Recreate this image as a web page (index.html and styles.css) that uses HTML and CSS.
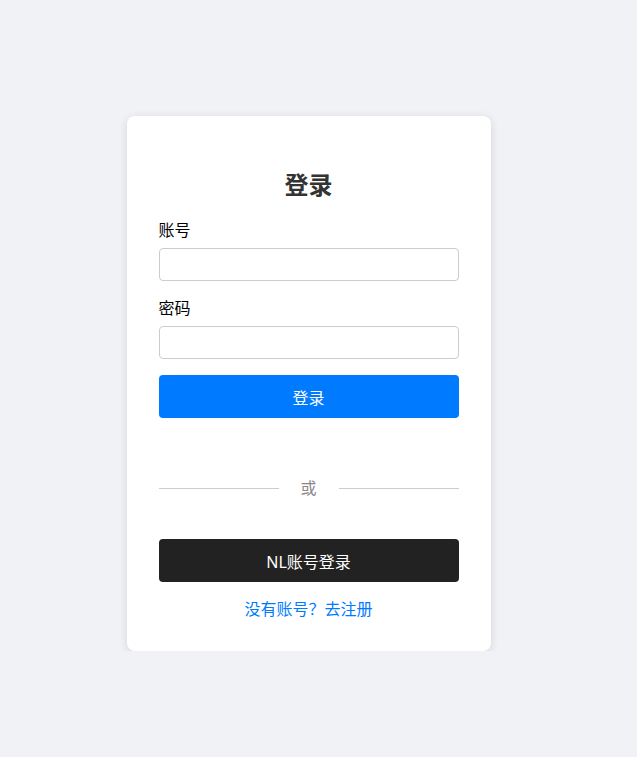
FILE: index.html
```html
<!DOCTYPE html>
<html lang="zh-CN">
<head>
  <meta charset="UTF-8">
  <meta name="viewport" content="width=device-width, initial-scale=1.0">
  <title>登录</title>
  <link rel="stylesheet" href="styles.css">
</head>
<body>
  <div class="login-box">
    <h2 class="login-title">登录</h2>
    <div class="form-group">
      <label for="username">账号</label>
      <input type="text" id="username">
    </div>
    <div class="form-group">
      <label for="password">密码</label>
      <input type="password" id="password">
    </div>
    <button class="btn btn-primary">登录</button>

    <div class="divider"><span>或</span></div>

    <button class="btn btn-dark">NL账号登录</button>
    <div class="register"><a href="#">没有账号？去注册</a></div>
  </div>
</body>
</html>
```

FILE: styles.css
```css
body {
  margin: 0;
  padding: 0 20px 0 0;
  background: #f0f2f5;
  font-family: "Noto Sans", "Noto Sans CJK SC", sans-serif;
}

.login-box {
  width: 300px;
  margin: 116px auto 0;
  padding: 32px 32px 30px;
  background: #fff;
  border-radius: 8px;
  box-shadow: 0 2px 10px rgba(0, 0, 0, 0.12);
}

.login-title {
  margin: 22px 0 19px;
  font-size: 24px;
  line-height: 29px;
  font-weight: bold;
  text-align: center;
  color: #333;
}

.form-group {
  margin-bottom: 15px;
}
.form-group label {
  display: block;
  margin-bottom: 6px;
  font-size: 16px;
  line-height: 24px;
  color: #000;
}
.form-group input {
  display: block;
  box-sizing: border-box;
  width: 100%;
  height: 33px;
  padding: 0 8px;
  border: 1px solid #ccc;
  border-radius: 4px;
  font-size: 16px;
  outline: none;
}

.btn {
  display: block;
  width: 100%;
  height: 43px;
  border: none;
  border-radius: 4px;
  color: #fff;
  font-family: inherit;
  font-size: 16px;
  cursor: pointer;
}
.btn-primary {
  margin-top: 16px;
  background: #007bff;
}
.btn-dark {
  background: #222;
}

.divider {
  display: flex;
  align-items: center;
  margin: 58px 0 39px;
  font-size: 16px;
  line-height: 24px;
  color: #888;
}
.divider::before,
.divider::after {
  content: "";
  flex: 1;
  border-top: 1px solid #ccc;
}
.divider span {
  margin: 0 22px;
}

.register {
  margin-top: 15px;
  text-align: center;
  font-size: 16px;
  line-height: 24px;
}
.register a {
  color: #007bff;
  text-decoration: none;
}
```
